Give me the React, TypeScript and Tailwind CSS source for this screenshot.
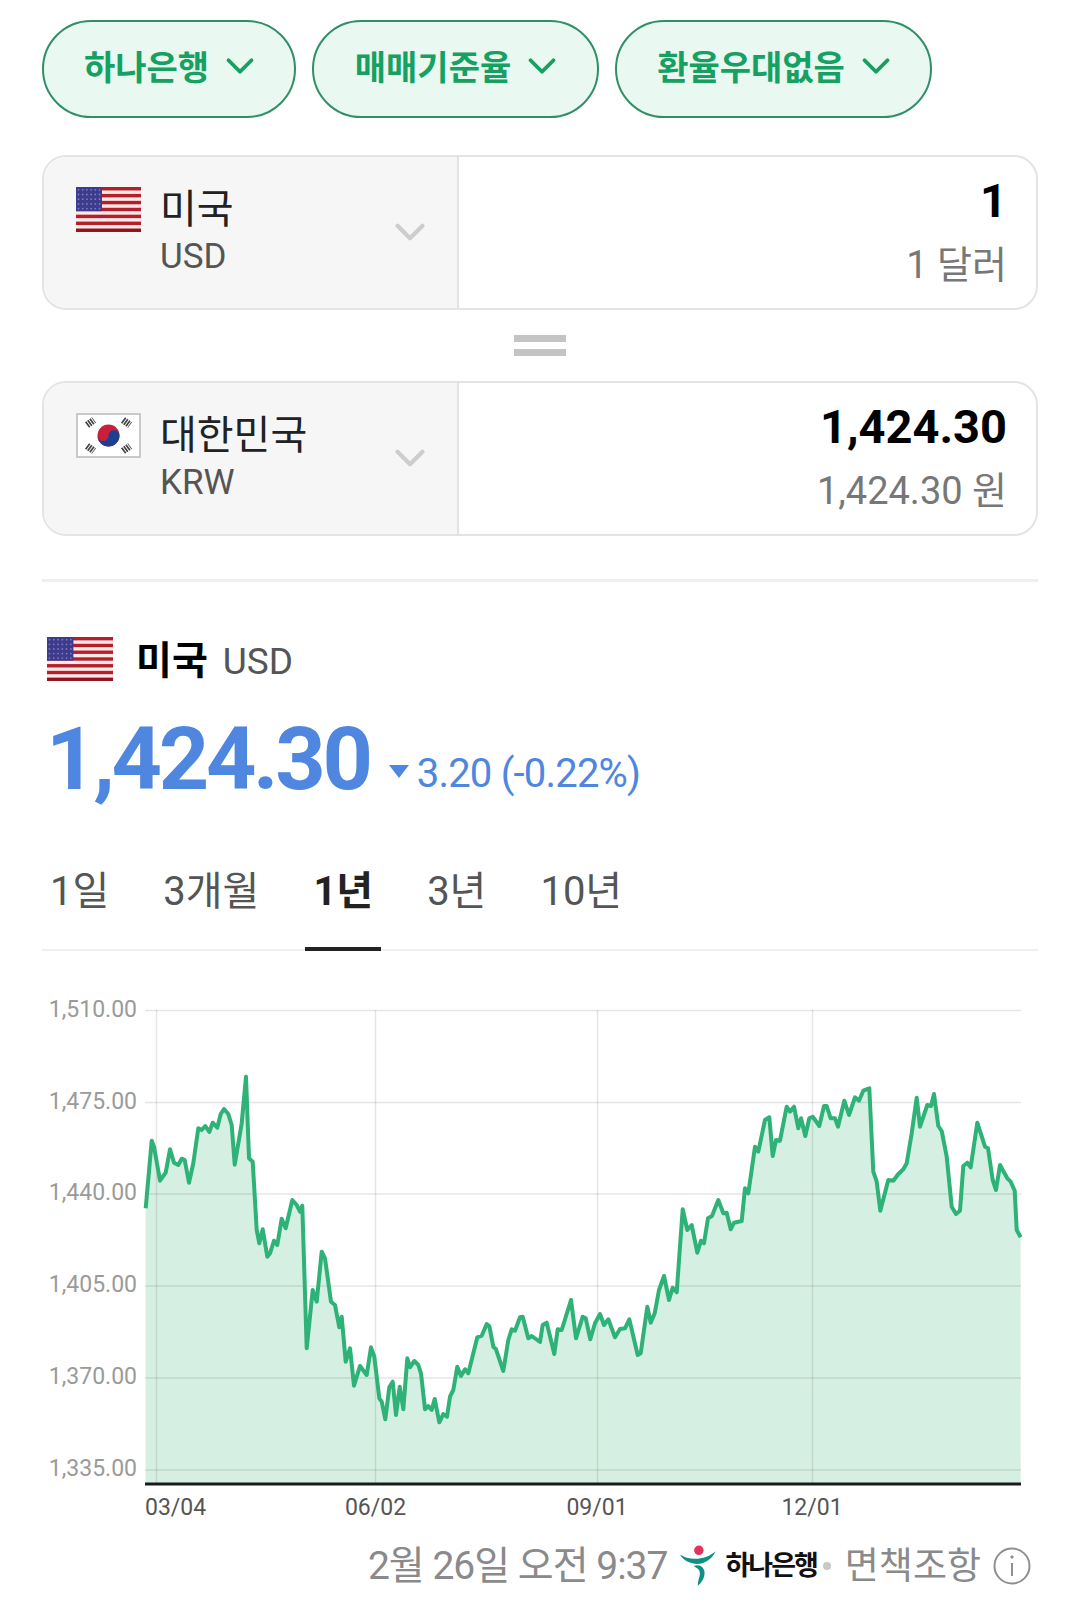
import React from 'react';
import { ChevronDown } from 'lucide-react';

type Pt = [number, number];

// traced from the reference in 3x crop coordinates, each list has its own origin
const fromCrop = (ox: number, oy: number, pts: Pt[]): Pt[] =>
  pts.map(([x, y]) => [ox + x / 3, oy + y / 3]);

const line: Pt[] = [
  ...fromCrop(30, 990, [
    [347, 655], [365, 452], [372, 470], [390, 572], [407, 548], [420, 478], [432, 518], [445, 525],
    [455, 506], [464, 510], [477, 578], [490, 520], [505, 415], [515, 420], [526, 408], [538, 426],
    [548, 398], [562, 413], [572, 372], [582, 357], [595, 372], [605, 405], [614, 524], [635, 400],
    [648, 260], [657, 505], [668, 515], [680, 720], [688, 760], [698, 718], [712, 800], [720, 790],
    [732, 752], [742, 765], [755, 686], [767, 715], [787, 630], [800, 645], [810, 665], [817, 647],
  ]),
  ...fromCrop(30, 1250, [
    [830, 295], [848, 120], [860, 155], [875, 5], [885, 25], [903, 155], [915, 165], [928, 232],
    [935, 200], [947, 335], [960, 295], [972, 407], [990, 348],
  ]),
  ...fromCrop(360, 1250, [
    [20, 375], [33, 292], [43, 320], [58, 445], [65, 455], [76, 508], [88, 412], [98, 395],
    [108, 495], [119, 410], [130, 478], [142, 325], [150, 352], [163, 333], [175, 345], [183, 370],
    [195, 478], [205, 468], [215, 480], [224, 447], [238, 517], [250, 492], [261, 500], [270, 440],
    [280, 420], [292, 350], [303, 378], [315, 358], [325, 370], [352, 262], [365, 257], [380, 222],
    [388, 228], [400, 290], [408, 298], [430, 363], [445, 270], [455, 238], [465, 242], [480, 202],
    [488, 200], [505, 265], [515, 258], [540, 276], [548, 225], [560, 218], [583, 312], [593, 238],
    [605, 240], [633, 150], [648, 265], [668, 200], [677, 205], [691, 268], [705, 220], [720, 192],
    [732, 225], [745, 208], [765, 262], [780, 237], [795, 235], [808, 208], [833, 315], [842, 310],
    [862, 170], [872, 218], [884, 190], [897, 120], [912, 78], [927, 150], [938, 113], [950, 127],
  ]),
  ...fromCrop(640, 1150, [
    [128, 178], [142, 240], [155, 225], [172, 308], [183, 272], [192, 280], [204, 205], [216, 198],
    [235, 150],
  ]),
  ...fromCrop(720, 1050, [
    [10, 490], [20, 488], [32, 538], [42, 518], [65, 513], [75, 415], [85, 430], [105, 290],
    [115, 305], [135, 210], [148, 202], [158, 318], [168, 270], [180, 272], [200, 170], [210, 185],
    [222, 170], [235, 235], [243, 205], [256, 258], [268, 205], [278, 200], [298, 228], [312, 168],
    [320, 168], [332, 205], [345, 205], [354, 230], [373, 152], [387, 195], [405, 142], [417, 152],
    [430, 122], [448, 115], [460, 365], [470, 395], [481, 482], [505, 390], [520, 392], [535, 372],
    [550, 358], [560, 340], [575, 250], [590, 143], [600, 230], [622, 165], [633, 168], [642, 132],
    [655, 228], [665, 243], [680, 320], [695, 470], [708, 492], [720, 482], [730, 348], [742, 338],
    [752, 352], [772, 218], [795, 290], [804, 295], [818, 390], [828, 420], [840, 345], [862, 385],
    [872, 395], [884, 422], [890, 540], [902, 562],
  ]),
];

// the svg starts at y 985 on the page
const CHART_TOP = 985;
const linePts = line.map(([x, y]) => `${x.toFixed(1)},${(y - CHART_TOP).toFixed(1)}`).join(' ');
const BASE = 1484 - CHART_TOP;
const areaPts = `145.7,${BASE} ${linePts} 1020.7,${BASE}`;

const gridYs = [
  { y: 1010.5, label: '1,510.00' },
  { y: 1102.5, label: '1,475.00' },
  { y: 1194, label: '1,440.00' },
  { y: 1286, label: '1,405.00' },
  { y: 1378, label: '1,370.00' },
  { y: 1470, label: '1,335.00' },
];
const gridXs = [
  { x: 156.5, label: '03/04', lx: 145, anchor: 'start' as const },
  { x: 375.5, label: '06/02', lx: 375.5, anchor: 'middle' as const },
  { x: 597.5, label: '09/01', lx: 597, anchor: 'middle' as const },
  { x: 812.5, label: '12/01', lx: 812, anchor: 'middle' as const },
];

const UsFlag = ({ className }: { className: string }) => (
  <svg viewBox="0 0 65 45" preserveAspectRatio="none" className={className}>
    <rect width="65" height="45" fill="#fbe9e7" />
    {[0, 1, 2, 3, 4, 5, 6].map((i) => (
      <rect key={i} y={i * 6.92} width="65" height="3.46" fill={i === 6 ? '#8f1420' : '#b3202c'} />
    ))}
    <rect width="26" height="24.2" fill="#3c3b8e" />
    {[0, 1, 2, 3, 4].map((r) =>
      [0, 1, 2, 3, 4, 5].map((c) => (
        <circle key={`${r}-${c}`} cx={2.5 + c * 4.2} cy={2.8 + r * 4.7} r="0.9" fill="#7d7dc4" />
      )),
    )}
  </svg>
);

const KrFlag = () => (
  <svg viewBox="0 0 65 45" className="w-[65px] h-[45px] shrink-0">
    <rect x="1" y="1" width="63" height="43" fill="#fff" stroke="#c9c9c9" strokeWidth="2" />
    <circle cx="32.5" cy="22.5" r="11" fill="#c8203a" />
    <path d="M21.5 22.5a11 11 0 0 0 22 0a5.5 5.5 0 0 0-11 0a5.5 5.5 0 0 1-11 0z" fill="#1c3f94" />
    <g stroke="#444" strokeWidth="7" strokeDasharray="1.7 0.9">
      <line x1="11" y1="12" x2="18" y2="7" />
      <line x1="47" y1="7" x2="54" y2="12" />
      <line x1="11" y1="33" x2="18" y2="38" />
      <line x1="47" y1="38" x2="54" y2="33" />
    </g>
  </svg>
);

const Pill = ({ label, width }: { label: string; width: string }) => (
  <div
    className={`${width} h-[98px] flex items-center justify-center gap-[8px] pl-[9px] rounded-full border-2 border-[#2f8f67] bg-[#e9f8f0] text-[#16a062] text-[34px] font-semibold leading-none`}
  >
    <span className="-mt-[2px]">{label}</span>
    <ChevronDown size={46} strokeWidth={2} className="-mt-[6px]" />
  </div>
);

const CurrencyCard = ({
  flag,
  name,
  code,
  amount,
  unit,
}: {
  flag: React.ReactNode;
  name: string;
  code: string;
  amount: string;
  unit: string;
}) => (
  <div className="h-[155px] flex rounded-[24px] border-2 border-[#e4e4e4] overflow-hidden">
    <div className="w-[415px] shrink-0 bg-[#f6f6f6] border-r-2 border-[#e2e2e2] flex items-start pl-[32px] pr-[22px] pt-[30px]">
      {flag}
      <div className="ml-[19px] flex-1">
        <p className="text-[#222] text-[40px] leading-[46px]">{name}</p>
        <p className="text-[#555] text-[35px] leading-[47px]">{code}</p>
      </div>
      <ChevronDown size={50} strokeWidth={2} className="text-[#cdcdcd] mt-[20px]" />
    </div>
    <div className="flex-1 flex flex-col items-end pr-[29px] pt-[14px]">
      <p className="text-black text-[47px] font-bold leading-[60px]">{amount}</p>
      <p className="mt-[3px] text-[#777] text-[38px] leading-[63px]">{unit}</p>
    </div>
  </div>
);

const tabs = ['1일', '3개월', '1년', '3년', '10년'];

export default function App() {
  return (
    <div className="w-[1080px] h-[1611px] overflow-hidden bg-white font-['Roboto','Noto_Sans_CJK_KR',sans-serif]">
      <div className="px-[42px] pt-[20px]">
        <div className="flex gap-[16px]">
          <Pill label="하나은행" width="w-[254px]" />
          <Pill label="매매기준율" width="w-[287px]" />
          <Pill label="환율우대없음" width="w-[317px]" />
        </div>

        <div className="mt-[37px]">
          <CurrencyCard
            flag={<UsFlag className="w-[65px] h-[45px] shrink-0" />}
            name="미국"
            code="USD"
            amount="1"
            unit="1 달러"
          />
        </div>
        <div className="h-[71px] flex flex-col items-center justify-center gap-[7px]">
          <div className="w-[52px] h-[7px] bg-[#c4c4c4]" />
          <div className="w-[52px] h-[7px] bg-[#c4c4c4]" />
        </div>
        <CurrencyCard flag={<KrFlag />} name="대한민국" code="KRW" amount="1,424.30" unit="1,424.30 원" />

        <div className="mt-[43px] h-[3px] bg-[#efefef]" />

        <div className="mt-[54px] flex items-center pl-[5px] h-[46px]">
          <UsFlag className="w-[66px] h-[44px] shrink-0" />
          <span className="ml-[23px] mt-[4px] text-black text-[39px] font-bold leading-none">미국</span>
          <span className="ml-[15px] mt-[4px] text-[#555] text-[37px] leading-none">USD</span>
        </div>

        <div className="mt-[25px] flex items-end pl-[4px] h-[104px] text-[#4f86e0]">
          <span className="text-[88px] font-bold leading-[104px] tracking-[-3.3px]">1,424.30</span>
          <span className="ml-[19px] mb-[33px] w-0 h-0 border-x-[10px] border-x-transparent border-t-[13px] border-t-[#4f86e0]" />
          <span className="ml-[8px] mb-[12px] text-[40px] leading-[50px] tracking-[-0.8px]">3.20 (-0.22%)</span>
        </div>

        <div className="mt-[43px] flex gap-[38px] border-b-2 border-[#efefef] h-[97px]">
          {tabs.map((t) => (
            <div
              key={t}
              className={
                t === '1년'
                  ? 'h-[97px] px-[8px] text-[40px] leading-[76px] font-bold text-[#222] border-b-4 border-[#222]'
                  : 'h-[97px] px-[8px] text-[40px] leading-[76px] text-[#555]'
              }
            >
              {t}
            </div>
          ))}
        </div>
      </div>

      <svg viewBox="0 0 1080 546" className="block mt-[34px] w-[1080px] h-[546px]">
        <polygon points={areaPts} fill="#d5f0e2" />
        {gridYs.map((g) => (
          <g key={g.label}>
            <line x1="145" x2="1021" y1={g.y - CHART_TOP} y2={g.y - CHART_TOP} stroke="#000" strokeOpacity="0.1" strokeWidth="1.5" />
            <text x="137" y={g.y - CHART_TOP + 6} textAnchor="end" fontSize="23" fill="#9a9a9a" fontFamily="Roboto, sans-serif">
              {g.label}
            </text>
          </g>
        ))}
        {gridXs.map((g) => (
          <g key={g.label}>
            <line x1={g.x} x2={g.x} y1={1010 - CHART_TOP} y2={BASE} stroke="#000" strokeOpacity="0.1" strokeWidth="1.5" />
            <text x={g.lx} y={BASE + 31} textAnchor={g.anchor} fontSize="23" fill="#555" fontFamily="Roboto, sans-serif">
              {g.label}
            </text>
          </g>
        ))}
        <polyline points={linePts} fill="none" stroke="#2eb277" strokeWidth="4" strokeLinejoin="round" />
        <line x1="145" x2="1021" y1={BASE} y2={BASE} stroke="#1a1a1a" strokeWidth="3" />
      </svg>

      <div className="mt-[9px] h-[52px] flex items-center justify-end pr-[49px] text-[#8a8a8a]">
        <span className="text-[39px] leading-none tracking-[-1px]">2월 26일 오전 9:37</span>
        <svg viewBox="0 0 44 40" className="ml-[12px] w-[46px] h-[42px] shrink-0">
          <circle cx="19" cy="5" r="4.5" fill="#e0325a" />
          <path d="M1 9c8 6 24 6 34-3 -4 9-12 12-17 12 -7 0-14-3-17-9z" fill="#0f8f8a" />
          <path d="M14 20c8-3 12 4 10 10 -1 4-4 7-6 9 0-6 2-8 2-12 0-4-3-5-6-7z" fill="#0f8f8a" />
        </svg>
        <span className="text-[#111] text-[27px] font-bold leading-none tracking-[-2px]">하나은행</span>
        <span className="mx-[6px] w-[8px] h-[8px] rounded-full bg-[#c8c8c8]" />
        <span className="ml-[8px] text-[37px] leading-none">면책조항</span>
        <svg viewBox="0 0 38 38" className="ml-[12px] w-[38px] h-[38px] shrink-0" fill="none" stroke="#8f8f8f">
          <circle cx="19" cy="19" r="17.5" strokeWidth="2" />
          <line x1="19" y1="16" x2="19" y2="29" strokeWidth="2" />
          <circle cx="19" cy="10" r="1.2" fill="#8f8f8f" strokeWidth="1" />
        </svg>
      </div>
    </div>
  );
}
